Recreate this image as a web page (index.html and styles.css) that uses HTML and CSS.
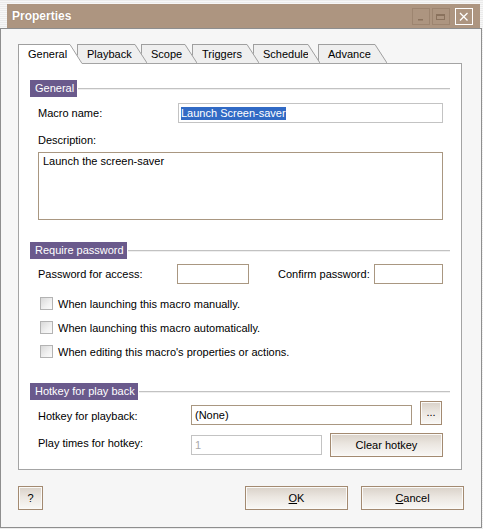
FILE: index.html
```html
<!DOCTYPE html>
<html>
<head>
<meta charset="utf-8">
<link rel="stylesheet" href="styles.css">
</head>
<body>
<div class="window">
  <div class="titlewrap">
    <div class="titlebar">
      <span class="title">Properties</span>
      <div class="tbtns">
        <span class="tbtn"><svg width="16" height="15" viewBox="0 0 16 15"><rect x="5" y="10" width="5" height="1.5" fill="#8a725d"/></svg></span>
        <span class="tbtn"><svg width="16" height="15" viewBox="0 0 16 15"><rect x="3.5" y="5.5" width="8" height="5" fill="none" stroke="#8a725d" stroke-width="1"/><rect x="3" y="5" width="9" height="2" fill="#8a725d"/></svg></span>
        <span class="tbtn close"><svg width="16" height="15" viewBox="0 0 16 15"><path d="M4 4 L11.5 11.5 M11.5 4 L4 11.5" stroke="#fff" stroke-width="1.3" fill="none"/></svg></span>
      </div>
    </div>
  </div>
  <div class="frame">
    <div class="tabs">
      <div class="tab active t1"><span class="tab-body w-general">General</span><svg class="slant" width="12" height="20" viewBox="0 0 12 20" preserveAspectRatio="none"><path class="sf" d="M0 0 L0.6 0 L12 19 L12 20 L0 20 Z"/><path class="sl" d="M0 0.5 L12 19.5"/></svg></div>
      <div class="tab t2"><span class="tab-body w-playback">Playback</span><svg class="slant" width="12" height="19" viewBox="0 0 12 19"><path class="sf" d="M0 0 L0.6 0 L12 19 L0 19 Z"/><path class="sl" d="M0 0.5 L12 19"/></svg></div>
      <div class="tab t3"><span class="tab-body w-scope">Scope</span><svg class="slant" width="12" height="19" viewBox="0 0 12 19"><path class="sf" d="M0 0 L0.6 0 L12 19 L0 19 Z"/><path class="sl" d="M0 0.5 L12 19"/></svg></div>
      <div class="tab t4"><span class="tab-body w-triggers">Triggers</span><svg class="slant" width="12" height="19" viewBox="0 0 12 19"><path class="sf" d="M0 0 L0.6 0 L12 19 L0 19 Z"/><path class="sl" d="M0 0.5 L12 19"/></svg></div>
      <div class="tab t5"><span class="tab-body w-schedule">Schedule</span><svg class="slant" width="12" height="19" viewBox="0 0 12 19"><path class="sf" d="M0 0 L0.6 0 L12 19 L0 19 Z"/><path class="sl" d="M0 0.5 L12 19"/></svg></div>
      <div class="tab t6"><span class="tab-body w-advance">Advance</span><svg class="slant" width="12" height="19" viewBox="0 0 12 19"><path class="sf" d="M0 0 L0.6 0 L12 19 L0 19 Z"/><path class="sl" d="M0 0.5 L12 19"/></svg></div>
    </div>
    <div class="panel">
      <div class="group">
        <div class="group-head"><span class="gh-label">General</span><span class="gh-line"></span></div>
        <div class="row macro-row">
          <span class="label w140">Macro name:</span>
          <span class="field gray grow"><span class="sel">Launch Screen-saver</span></span>
        </div>
        <div class="row desc-label"><span class="label">Description:</span></div>
        <div class="row desc-row">
          <div class="textarea">Launch the screen-saver</div>
        </div>
      </div>
      <div class="group g-pass">
        <div class="group-head"><span class="gh-label">Require password</span><span class="gh-line"></span></div>
        <div class="row pass-row">
          <span class="label w139">Password for access:</span>
          <span class="field w72"></span>
          <span class="label confirm">Confirm password:</span>
          <span class="field w69"></span>
        </div>
        <div class="checks">
          <div class="check"><span class="box"></span><span>When launching this macro manually.</span></div>
          <div class="check"><span class="box"></span><span>When launching this macro automatically.</span></div>
          <div class="check"><span class="box"></span><span>When editing this macro's properties or actions.</span></div>
        </div>
      </div>
      <div class="group g-hot">
        <div class="group-head"><span class="gh-label">Hotkey for play back</span><span class="gh-line"></span></div>
        <div class="row hot-row">
          <span class="label w153 lift">Hotkey for playback:</span>
          <span class="field w221">(None)</span>
          <span class="btn dots">...</span>
        </div>
        <div class="row play-row">
          <span class="label w153 lift2">Play times for hotkey:</span>
          <span class="field gray disabled w131">1</span>
          <span class="btn clear">Clear hotkey</span>
        </div>
      </div>
    </div>
    <div class="footer">
      <span class="btn qbtn">?</span>
      <div class="okgroup">
        <span class="btn big"><u>O</u>K</span>
        <span class="btn big"><u>C</u>ancel</span>
      </div>
    </div>
  </div>
</div>
</body>
</html>
```
FILE: styles.css
```css
* { box-sizing: border-box; }
html, body { margin: 0; padding: 0; }
body {
  width: 483px;
  height: 529px;
  overflow: hidden;
  background: #f4f4f4;
  font-family: "Liberation Sans", Arial, sans-serif;
  font-size: 11px;
  color: #000;
}
.window {
  width: 483px;
  height: 529px;
  display: flex;
  flex-direction: column;
  background: repeating-linear-gradient(to bottom, #ebebeb 0 1px, #f7f7f7 1px 2px);
}
.titlewrap {
  height: 28px;
  padding: 4px 3px 0 7px;
}
.titlebar {
  height: 24px;
  background: #ad9580;
  display: flex;
  align-items: center;
  padding: 0 7px 0 5px;
}
.title {
  flex: 1;
  font-weight: bold;
  font-size: 12px;
  color: #fff;
  text-shadow: 0 0 1px rgba(70, 50, 40, 0.35);
}
.tbtns { display: flex; }
.tbtn {
  width: 18px;
  height: 17px;
  border: 1px solid #9d8570;
  display: flex;
  margin-left: 2px;
}
.tbtn.close { border-color: #fff; margin-left: 5px; }
.tbtn svg { display: block; }

.frame {
  width: 482px;
  height: 500px;
  border: 1px solid #8e8e8e;
  background: #f6f6f6;
  padding: 15px 17px 0 17px;
}

/* tabs */
.tabs {
  display: flex;
  align-items: flex-start;
  height: 19px;
}
.tab {
  display: flex;
  position: relative;
  height: 19px;
}
.tab.active { height: 20px; z-index: 10; }
.t2 { margin-left: -5px; z-index: 6; }
.t3 { margin-left: -6px; z-index: 5; }
.t4 { margin-left: -5px; z-index: 4; }
.t5 { margin-left: -6px; z-index: 3; }
.t6 { margin-left: -2px; z-index: 2; }
.tab-body {
  display: block;
  height: 100%;
  border-top: 1px solid #9f9f9f;
  border-left: 1px solid #9f9f9f;
  background: #efefef;
  padding-left: 9px;
  line-height: 18px;
  white-space: nowrap;
}
.tab.active .tab-body { background: #fff; }
.slant { display: block; }
.slant .sf { fill: #efefef; }
.tab.active .slant .sf { fill: #fff; }
.slant .sl { stroke: #9f9f9f; stroke-width: 1; fill: none; }
.w-general { width: 52px; }
.w-playback { width: 58px; }
.w-scope { width: 44px; }
.w-triggers { width: 55px; }
.w-schedule { width: 55px; }
.w-advance { width: 57px; }

/* panel */
.panel {
  width: 444px;
  height: 407px;
  border: 1px solid #a4a4a4;
  background: #fff;
  padding: 16px 11px 0 11px;
}
.group-head {
  display: flex;
  align-items: center;
  height: 17px;
}
.gh-label {
  background: #6a5a8c;
  color: #fff;
  line-height: 17px;
  height: 17px;
  padding: 0 3px 0 5px;
  white-space: nowrap;
}
.gh-line {
  flex: 1;
  height: 2px;
  margin-left: 1px;
  border-top: 1px solid #c2c2c2;
  background: #efefef;
}
.g-pass { margin-top: 22px; }
.g-hot { margin-top: 25px; }

.row {
  display: flex;
  align-items: center;
  padding: 0 7px 0 8px;
}
.label { line-height: 13px; white-space: nowrap; }
.w140 { width: 140px; }
.w139 { width: 139px; }
.w153 { width: 153px; }
.grow { flex: 1; }
.w72 { width: 72px; }
.w69 { width: 69px; }
.w221 { width: 221px; }
.w131 { width: 131px; }
.confirm { width: 96px; margin-left: 29px; }

.field {
  display: block;
  height: 20px;
  border: 1px solid #a99781;
  background: #fff;
  padding: 0 3px;
  line-height: 18px;
  white-space: nowrap;
  overflow: hidden;
}
.field.gray { border-color: #c3c3c3; }
.field.disabled { color: #a9a9a9; }
.macro-row { margin-top: 6px; height: 20px; }
.macro-row .field { padding-left: 2px; }
.sel {
  display: inline-block;
  background: #316ac5;
  color: #fff;
  line-height: 13px;
  vertical-align: middle;
  margin-top: -2px;
}
.desc-label { margin-top: 11px; }
.desc-row { margin-top: 5px; }
.textarea {
  width: 100%;
  height: 68px;
  border: 1px solid #a99781;
  padding: 2px 4px;
  line-height: 13px;
}
.pass-row { margin-top: 5px; height: 20px; }

.checks {
  margin-top: 13px;
  padding-left: 10px;
  display: flex;
  flex-direction: column;
  gap: 11px;
}
.check {
  display: flex;
  align-items: center;
  height: 13px;
  gap: 5px;
  white-space: nowrap;
}
.box {
  width: 13px;
  height: 13px;
  border: 1px solid #b3b3b3;
  background: linear-gradient(135deg, #d9d9d9 0%, #f1f1f1 60%, #fbfbfb 100%);
  flex: none;
}

.hot-row { margin-top: 1px; height: 24px; align-items: flex-end; }
.lift { margin-bottom: 2px; }
.play-row { margin-top: 8px; height: 24px; }
.lift2 { margin-bottom: 4px; }

.btn {
  display: flex;
  align-items: center;
  justify-content: center;
  height: 24px;
  border: 1px solid #a38a71;
  background: linear-gradient(to bottom, #d9d1c8 0%, #ebe6e0 45%, #f9f8f6 100%);
  box-shadow: inset 0 0 0 1px #fbfaf8;
  white-space: nowrap;
}
.dots { width: 22px; margin-left: 8px; padding-bottom: 3px; }
.clear { width: 113px; margin-left: 8px; }

.footer {
  margin-top: 16px;
  display: flex;
  justify-content: space-between;
}
.qbtn { width: 25px; }
.okgroup { display: flex; gap: 13px; }
.big { width: 103px; }
u { text-decoration: underline; text-underline-offset: 1px; }
```
